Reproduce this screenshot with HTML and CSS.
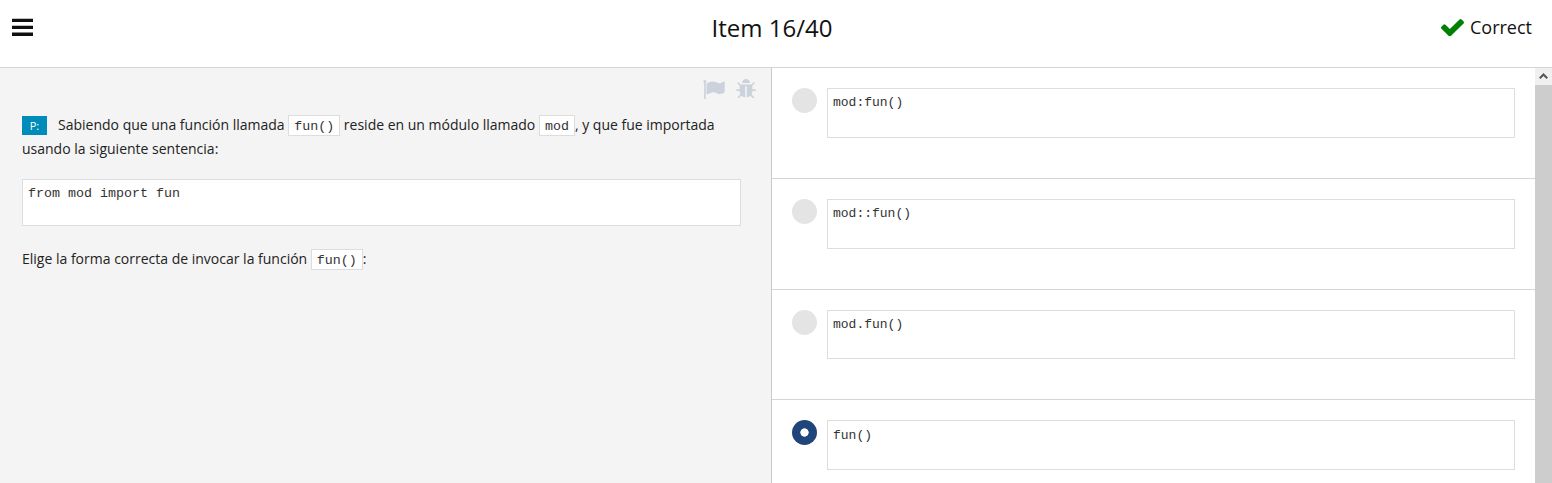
FILE: index.html
```html
<!DOCTYPE html>
<html lang="es">
<head>
<meta charset="utf-8">
<title>Item 16/40</title>
<link rel="stylesheet" href="styles.css">
</head>
<body>
<header class="header">
  <svg class="menu" viewBox="0 0 21 18"><path d="M0 .7h21v3.4H0zM0 7.7h21v3.4H0zM0 14.500h21V18H0z"/></svg>
  <h1 class="title">Item 16/40</h1>
  <div class="status">
    <svg class="check" viewBox="121 334 1550 1188" preserveAspectRatio="none"><path d="M1671 566q0 40-28 68l-724 724-136 136q-28 28-68 28t-68-28l-136-136-362-362q-28-28-28-68t28-68l136-136q28-28 68-28t68 28l294 295 656-657q28-28 68-28t68 28l136 136q28 28 28 68z"/></svg>
    <span>Correct</span>
  </div>
</header>
<main class="main">
  <section class="question">
    <div class="tools">
      <svg class="flag" viewBox="64 128 1728 1536"><path d="M320 256q0 72-64 110v1266q0 13-9.500 22.500t-22.500 9.500h-64q-13 0-22.500-9.500t-9.500-22.500v-1266q-64-38-64-110 0-53 37.500-90.500t90.500-37.500 90.500 37.500 37.500 90.500zm1472 64v763q0 25-12.500 38.500t-39.500 27.500q-215 116-369 116-61 0-123.500-22t-108.500-48-115.500-48-142.500-22q-192 0-464 146-17 9-33 9-26 0-45-19t-19-45v-742q0-32 31-55 21-14 79-43 236-120 421-120 107 0 200 29t219 88q38 19 88 19 54 0 117.500-21t110-47 88-47 54.500-21q26 0 45 19t19 45z"/></svg>
      <svg class="bug" viewBox="96 64 1600 1536"><path d="M1696 960q0 26-19 45t-45 19h-224q0 171-67 290l208 209q19 19 19 45t-19 45q-18 19-45 19t-45-19l-198-197q-5 5-15 13t-42 28.500-65 36.500-82 29-97 13v-896h-128v896q-51 0-101.500-13.500t-87-33-66-39-43.500-32.500l-15-14-183 207q-20 21-48 21-24 0-43-16-19-18-20.500-44.500t15.500-46.500l202-227q-58-114-58-274h-224q-26 0-45-19t-19-45 19-45 45-19h224v-294l-173-173q-19-19-19-45t19-45 45-19 45 19l173 173h844l173-173q19-19 45-19t45 19 19 45-19 45l-173 173v294h224q26 0 45 19t19 45zm-480-576h-640q0-133 93.500-226.500t226.500-93.500 226.500 93.500 93.500 226.500z"/></svg>
    </div>
    <p class="text"><span class="badge">P:</span>Sabiendo que una función llamada <code class="code">fun()</code> reside en un módulo llamado <code class="code">mod</code>, y que fue importada<br>usando la siguiente sentencia:</p>
    <pre class="block">from mod import fun</pre>
    <p class="text">Elige la forma correcta de invocar la función <code class="code">fun()</code>:</p>
  </section>
  <section class="answers">
    <div class="answer"><span class="radio"></span><pre class="option">mod:fun()</pre></div>
    <div class="answer"><span class="radio"></span><pre class="option">mod::fun()</pre></div>
    <div class="answer short"><span class="radio"></span><pre class="option">mod.fun()</pre></div>
    <div class="answer last"><span class="radio selected"></span><pre class="option">fun()</pre></div>
  </section>
  <div class="scrollbar"><div class="scroll-up"><svg class="arrow" viewBox="0 0 9 6"><path d="M.8 5.300 4.500 1.500 8.200 5.300"/></svg></div></div>
</main>
</body>
</html>
```
FILE: styles.css
```css
* { box-sizing: border-box; }
body {
  margin: 0;
  height: 483px;
  overflow: hidden;
  display: flex;
  flex-direction: column;
  background: #fff;
  color: #222;
  font-family: "Open Sans", "Noto Sans", sans-serif;
}
.header {
  height: 68px;
  flex: none;
  display: grid;
  grid-template-columns: 1fr auto 1fr;
  align-items: start;
  padding: 0 20px 0 12px;
  border-bottom: 1px solid #d3d5d6;
  color: #111;
}
.menu { width: 21px; height: 18px; margin-top: 18px; fill: #111; }
.title { margin: 11px 0 0; font-size: 24px; line-height: 33px; font-weight: 400; }
.status {
  display: flex;
  justify-content: flex-end;
  gap: 5.500px;
  padding-top: 15px;
  font-size: 18px;
  line-height: 25px;
}
.check { width: 23px; height: 17.500px; margin-top: 3.500px; fill: #008000; }
.main { flex: 1; min-height: 0; display: flex; }
.question {
  width: 772px;
  flex: none;
  padding: 11px 15px 0 22px;
  background: #f4f4f4;
  border-right: 1px solid #c8cacc;
}
.tools { display: flex; justify-content: flex-end; gap: 11px; height: 34px; }
.flag { width: 22px; height: 19px; margin-top: 1px; fill: #cbd2dc; }
.bug { width: 20px; height: 19px; fill: #cbd2dc; }
.text { margin: 0; font-size: 14px; line-height: 24px; white-space: nowrap; }
.badge {
  display: inline-block;
  width: 25px;
  height: 19px;
  margin-right: 11px;
  background: #008cba;
  color: #fff;
  font-size: 11px;
  line-height: 19px;
  text-align: center;
}
.code, .block, .option {
  font-family: "Liberation Mono", monospace;
  font-size: 13px;
  color: #333;
  background: #fff;
  border: 1px solid #ddd;
}
.code {
  display: inline-block;
  height: 21px;
  padding: 0 5px;
  font-size: 13.330px;
  line-height: 22px;
}
.block {
  width: 719px;
  height: 47px;
  margin: 18px 0 21px;
  padding: 5px;
  line-height: 18px;
  font-size: 13.330px;
}
.answers { flex: 1; min-width: 0; }
.answer {
  display: flex;
  gap: 10px;
  height: 111px;
  padding: 20px 20px 0;
  border-bottom: 1px solid #d3d5d6;
}
.answer.short { height: 110px; }
.answer.last { height: 83px; border-bottom: 0; }
.last .option { padding-top: 6px; }
.option { flex: 1; height: 50px; margin: 0; padding: 5px; line-height: 18px; }
.short .option { height: 49px; }
.radio { width: 25px; height: 25px; flex: none; border-radius: 50%; background: #e4e4e4; }
.selected { background: radial-gradient(circle, #fff 3.800px, #20457a 4.500px); }
.scrollbar { width: 17px; flex: none; background: #cdcdcd; }
.scroll-up {
  height: 17px;
  display: flex;
  justify-content: center;
  padding-top: 5px;
  background: #f0f0f0;
}
.arrow { width: 9px; height: 6px; fill: none; stroke: #555; stroke-width: 2; }
```
